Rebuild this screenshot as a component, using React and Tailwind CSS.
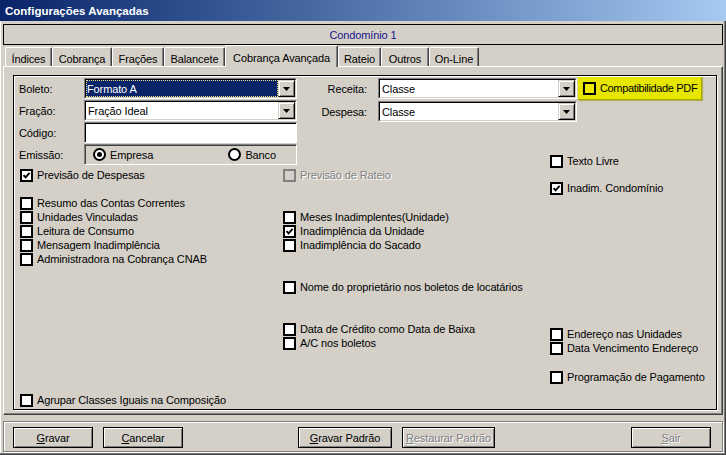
import React from 'react';

const Tick = () => (
  <svg width="9" height="9" viewBox="0 0 9 9">
    <path d="M1.5 4.2 L3.6 6.4 L7.6 1.8" fill="none" stroke="black" strokeWidth="1.9" />
  </svg>
);

const Check = ({ label, checked, disabled, yellow, className = '' }) => (
  <div className={`flex items-center h-[14px] ${className}`}>
    <span
      className={`w-[13px] h-[13px] border-2 flex items-center justify-center shrink-0 ${
        disabled ? 'border-[#808080] bg-[#d4d0c8]' : yellow ? 'border-black bg-[#ecec00]' : 'border-black bg-white'
      }`}
    >
      {checked && <Tick />}
    </span>
    <span
      className={`ml-[4px] -mt-[1px] whitespace-nowrap ${
        disabled ? 'text-[#808080] [text-shadow:1px_1px_0_#fff]' : 'text-black'
      } ${yellow ? 'tracking-[-0.35px]' : ''}`}
    >
      {label}
    </span>
  </div>
);

const Radio = ({ checked }) => (
  <span className="w-[13px] h-[13px] rounded-full border-2 border-black bg-white flex items-center justify-center shrink-0">
    {checked && <span className="w-[5px] h-[5px] rounded-full bg-black" />}
  </span>
);

const Select = ({ value, selected, className = '' }) => (
  <div className={`flex h-[21px] border border-t-[#808080] border-l-[#808080] border-r-white border-b-white ${className}`}>
    <div className="flex-1 flex bg-white border border-t-black border-l-black border-r-[#d4d0c8] border-b-[#d4d0c8]">
      <div className="flex-1 flex items-center">
        {selected ? (
          <div className="h-full flex-1 flex items-center bg-[#0a246a] text-white pl-[1px] outline-1 outline-dotted outline-[#f0e080] -outline-offset-1">
            {value}
          </div>
        ) : (
          <div className="pl-[2px]">{value}</div>
        )}
      </div>
      <div className="w-[17px] h-full bg-[#d4d0c8] border border-t-[#d4d0c8] border-l-[#d4d0c8] border-r-black border-b-black shadow-[inset_1px_1px_0_#fff,inset_-1px_-1px_0_#808080] flex items-center justify-center">
        <svg width="7" height="4" viewBox="0 0 7 4">
          <path d="M0 0 H7 L3.5 4 Z" fill="black" />
        </svg>
      </div>
    </div>
  </div>
);

const Btn = ({ children, u, disabled, className = '' }) => (
  <div
    className={`h-[21px] flex items-center justify-center border border-black shadow-[inset_1px_1px_0_#fff,inset_-1px_-1px_0_#808080] ${
      disabled ? 'text-[#808080] [text-shadow:1px_1px_0_#fff]' : 'text-black'
    } ${className}`}
  >
    <span className="underline underline-offset-1">{u}</span>
    {children}
  </div>
);

const tabs = [
  ['Índices', 'w-[47px]'],
  ['Cobrança', 'w-[60px]'],
  ['Frações', 'w-[52px]'],
  ['Balancete', 'w-[61px]'],
  ['Cobrança Avançada', 'w-[113px]', true],
  ['Rateio', 'w-[43px]'],
  ['Outros', 'w-[48px]'],
  ['On-Line', 'w-[50px]'],
];

export default function App() {
  return (
    <div className="w-[726px] h-[455px] bg-[#d4d0c8] flex flex-col overflow-hidden font-['Liberation_Sans',Arial,sans-serif] text-[11px] tracking-[-0.12px] leading-[14px] text-black shadow-[inset_-1px_-1px_0_#404040,inset_-2px_-2px_0_#808080,inset_1px_0_0_#fff]">
      {/* title bar */}
      <div className="h-[21px] shrink-0 flex items-center pl-[5px] bg-gradient-to-r from-[#0a246a] to-[#a6caf0] text-white font-bold text-[11.5px] tracking-normal">
        Configurações Avançadas
      </div>

      <div className="flex flex-col px-[3px]">
        {/* condominio */}
        <div className="mt-[3px] h-[21px] border border-black flex items-center justify-center text-[#14148c]">
          Condomínio 1
        </div>

        {/* tabs */}
        <div className="h-[21px] flex items-end pl-[2px]">
          {tabs.map(([t, w, active]) => (
            <div
              key={t}
              className={`${w} flex justify-center rounded-t-[2px] border-l border-t border-l-white border-t-white border-r border-r-[#404040] shadow-[inset_-1px_0_0_#808080] ${
                active ? 'h-[22px] -mb-[1px] relative z-10 bg-[#d4d0c8] pt-[5px]' : 'h-[19px] pt-[4px]'
              }`}
            >
              {t}
            </div>
          ))}
        </div>

        {/* page */}
        <div className="h-[349px] border border-t-white border-l-white border-r-[#404040] border-b-[#404040] shadow-[inset_-1px_-1px_0_#808080] pt-[8px] pl-[9px] pr-[5px] pb-[4px]">
          <div className="h-full flex flex-col border border-black shadow-[1px_1px_0_#fff,inset_1px_1px_0_#fff]">
            {/* top fields */}
            <div className="flex">
              <div className="flex flex-col gap-[1px] pt-[2px] pl-[5px]">
                <div className="flex items-center h-[21px]">
                  <span className="w-[65px]">Boleto:</span>
                  <Select value="Formato A" selected className="w-[213px]" />
                </div>
                <div className="flex items-center h-[21px]">
                  <span className="w-[65px]">Fração:</span>
                  <Select value="Fração Ideal" className="w-[213px]" />
                </div>
                <div className="flex items-center h-[21px]">
                  <span className="w-[65px]">Código:</span>
                  <div className="w-[213px] h-[21px] bg-white border border-t-[#808080] border-l-[#808080] border-r-white border-b-white shadow-[inset_1px_1px_0_#000]" />
                </div>
                <div className="flex items-center h-[21px]">
                  <span className="w-[65px]">Emissão:</span>
                  <div className="w-[213px] h-[21px] flex items-center border border-t-[#808080] border-l-[#808080] border-r-white border-b-white shadow-[inset_1px_1px_0_#404040] pl-[8px] pr-[20px]">
                    <Radio checked />
                    <span className="ml-[4px]">Empresa</span>
                    <span className="ml-auto" />
                    <Radio />
                    <span className="ml-[4px]">Banco</span>
                  </div>
                </div>
              </div>

              <div className="flex flex-col pt-[2px]">
                <div className="flex items-start">
                  <div className="flex items-center h-[21px]">
                    <span className="w-[70px] text-right">Receita:</span>
                    <Select value="Classe" className="w-[199px] ml-[11px]" />
                  </div>
                  <div className="ml-[1px] -mt-[1px] w-[124px] h-[23px] bg-[#e6e600] shadow-[inset_-1px_-1px_0_#a8a800,1px_1px_1px_#b0b060] flex items-center pl-[5px]">
                    <Check label="Compatibilidade PDF" yellow />
                  </div>
                </div>
                <div className="flex items-center h-[21px] mt-[1px]">
                  <span className="w-[70px] text-right">Despesa:</span>
                  <Select value="Classe" className="w-[199px] ml-[11px]" />
                </div>
                <Check label="Texto Livre" className="mt-[32px] ml-[253px]" />
              </div>
            </div>

            {/* checkbox columns */}
            <div className="flex-1 flex pb-[2px]">
              <div className="w-[269px] flex flex-col pl-[6px]">
                <Check label="Previsão de Despesas" checked />
                <Check label="Resumo das Contas Correntes" className="mt-[14px]" />
                <Check label="Unidades Vinculadas" />
                <Check label="Leitura de Consumo" />
                <Check label="Mensagem Inadimplência" />
                <Check label="Administradora na Cobrança CNAB" />
                <Check label="Agrupar Classes Iguais na Composição" className="mt-auto" />
              </div>
              <div className="w-[267px] flex flex-col">
                <Check label="Previsão de Rateio" disabled />
                <Check label="Meses Inadimplentes(Unidade)" className="mt-[28px]" />
                <Check label="Inadimplência da Unidade" checked />
                <Check label="Inadimplência do Sacado" />
                <Check label="Nome do proprietário nos boletos de locatários" className="mt-[28px]" />
                <Check label="Data de Crédito como Data de Baixa" className="mt-[28px]" />
                <Check label="A/C nos boletos" />
              </div>
              <div className="flex flex-col">
                <Check label="Inadim. Condomínio" checked className="mt-[13px]" />
                <Check label="Endereço nas Unidades" className="mt-[132px]" />
                <Check label="Data Vencimento Endereço" />
                <Check label="Programação de Pagamento" className="mt-[15px]" />
              </div>
            </div>
          </div>
        </div>

        {/* buttons */}
        <div className="mt-[6px] h-[31px] border border-[#808080] shadow-[1px_1px_0_#fff,inset_1px_1px_0_#fff] flex items-start pt-[5px] pl-[9px]">
          <Btn u="G" className="w-[80px]">ravar</Btn>
          <Btn u="C" className="w-[80px] ml-[10px]">ancelar</Btn>
          <Btn u="G" className="w-[94px] ml-[115px]">ravar Padrão</Btn>
          <Btn u="R" disabled className="w-[93px] ml-[10px]">estaurar Padrão</Btn>
          <Btn u="S" disabled className="w-[80px] ml-[136px]">air</Btn>
        </div>
      </div>
    </div>
  );
}
